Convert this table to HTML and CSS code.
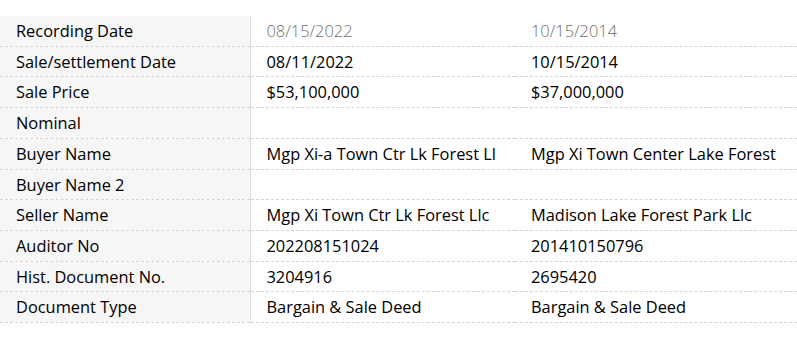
FILE: index.html
```html
<!DOCTYPE html>
<html>
<head>
<meta charset="utf-8">
<link rel="stylesheet" href="styles.css">
</head>
<body>
<table class="sales">
  <colgroup>
    <col class="c-label">
    <col class="c-val">
    <col class="c-val2">
  </colgroup>
  <tbody>
    <tr class="muted"><th>Recording Date</th><td>08/15/2022</td><td>10/15/2014</td></tr>
    <tr><th>Sale/settlement Date</th><td>08/11/2022</td><td>10/15/2014</td></tr>
    <tr><th>Sale Price</th><td>$53,100,000</td><td>$37,000,000</td></tr>
    <tr><th>Nominal</th><td></td><td></td></tr>
    <tr><th>Buyer Name</th><td>Mgp Xi-a Town Ctr Lk Forest Ll</td><td>Mgp Xi Town Center Lake Forest</td></tr>
    <tr><th>Buyer Name 2</th><td></td><td></td></tr>
    <tr><th>Seller Name</th><td>Mgp Xi Town Ctr Lk Forest Llc</td><td>Madison Lake Forest Park Llc</td></tr>
    <tr><th>Auditor No</th><td>202208151024</td><td>201410150796</td></tr>
    <tr><th>Hist. Document No.</th><td>3204916</td><td>2695420</td></tr>
    <tr><th>Document Type</th><td>Bargain &amp; Sale Deed</td><td>Bargain &amp; Sale Deed</td></tr>
  </tbody>
</table>
</body>
</html>
```
FILE: styles.css
```css
html, body {
  margin: 0;
  padding: 0;
  background: #fff;
}
body {
  padding-top: 16px;
  font-family: "Open Sans", "Noto Sans", sans-serif;
  font-size: 16.4px;
  color: #000;
}
.sales {
  width: 797px;
  border-collapse: collapse;
  table-layout: fixed;
}
.c-label { width: 250px; }
.c-val { width: 265px; }
.c-val2 { width: 282px; }
.sales th,
.sales td {
  text-align: left;
  font-weight: 400;
  padding: 5px 16px;
  line-height: 19.7px;
  height: 19.7px;
  border-bottom: 1px dashed #d4d4d4;
  white-space: nowrap;
  overflow: hidden;
  vertical-align: middle;
}
.sales th {
  background: #f6f6f6;
  border-right: 1px solid #dcdcdc;
  color: #000;
}
.sales tr.muted td {
  color: #6e6e6e;
  font-weight: 300;
}
```
